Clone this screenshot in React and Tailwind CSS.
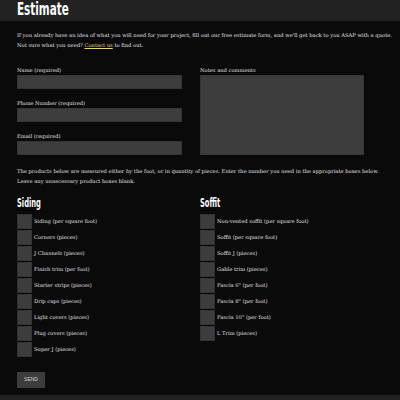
import React from "react";

const siding = [
  "Siding (per square foot)",
  "Corners (pieces)",
  "J Channels (pieces)",
  "Finish trim (per foot)",
  "Starter strips (pieces)",
  "Drip caps (pieces)",
  "Light covers (pieces)",
  "Plug covers (pieces)",
  "Super J (pieces)",
];
const soffit = [
  "Non-vented soffit (per square foot)",
  "Soffit (per square foot)",
  "Soffit J (pieces)",
  "Gable trim (pieces)",
  'Fascia 6" (per foot)',
  'Fascia 8" (per foot)',
  'Fascia 10" (per foot)',
  "L Trim (pieces)",
];

const serif = { fontFamily: '"DejaVu Serif", "Liberation Serif", serif' };
const head = { fontFamily: '"DejaVu Sans Condensed", "DejaVu Sans", sans-serif' };

function Field({ label }) {
  return (
    <div className="flex flex-col">
      <div className="h-[10px] text-[5.2px] leading-[10px] text-[#e2e2e2]" style={serif}>{label}</div>
      <div className="h-[14px] bg-[#3d3d3d] border border-[#353535]" />
    </div>
  );
}

function Product({ items, title }) {
  return (
    <div className="flex flex-col">
      <div className="h-[16px] leading-[16px]">
        <span className="inline-block origin-left scale-x-[0.6] text-[12.5px] font-bold text-white" style={head}>{title}</span>
      </div>
      <div className="mt-[5px] flex flex-col gap-[1px]">
        {items.map((t) => (
          <div key={t} className="flex items-center h-[15px]">
            <div className="w-[15px] h-[15px] bg-[#3d3d3d] border border-[#333]" />
            <span className="ml-[2px] text-[5.2px] text-[#e2e2e2]" style={serif}>{t}</span>
          </div>
        ))}
      </div>
    </div>
  );
}

export default function App() {
  return (
    <div className="w-[400px] h-[400px] bg-[#0a0a0a] flex flex-col overflow-hidden">
      <div className="h-[21px] bg-[#222222] px-[17px] flex items-center shrink-0">
        <h1 className="inline-block origin-left scale-x-[0.68] text-[17px] leading-[21px] font-bold text-white -mt-[3px]" style={head}>Estimate</h1>
      </div>
      <div className="px-[17px] flex flex-col flex-1">
        <p className="mt-[9px] text-[5.2px] leading-[10px] text-[#e2e2e2] whitespace-nowrap" style={serif}>
          If you already have an idea of what you will need for your project, fill out our free estimate form, and we'll get back to you ASAP with a quote.
          <br />
          Not sure what you need? <span className="text-[#e2d77a] underline">Contact us</span> to find out.
        </p>
        <div className="mt-[15px] flex gap-[18px]">
          <div className="w-[165px] flex flex-col gap-[9px]">
            <Field label="Name (required)" />
            <Field label="Phone Number (required)" />
            <Field label="Email (required)" />
          </div>
          <div className="w-[164px] flex flex-col">
            <div className="h-[10px] text-[5.2px] leading-[10px] text-[#e2e2e2]" style={serif}>Notes and comments</div>
            <div className="h-[80px] bg-[#3d3d3d] border border-[#353535]" />
          </div>
        </div>
        <p className="mt-[11px] text-[5.2px] leading-[10px] text-[#e2e2e2] whitespace-nowrap" style={serif}>
          The products below are measured either by the foot, or in quantity of pieces. Enter the number you need in the appropriate boxes below.
          <br />
          Leave any unnecessary product boxes blank.
        </p>
        <div className="mt-[7px] flex gap-[18px]">
          <div className="w-[165px]"><Product title="Siding" items={siding} /></div>
          <div className="w-[164px]"><Product title="Soffit" items={soffit} /></div>
        </div>
        <div className="mt-[15px]">
          <div className="w-[28px] h-[16px] bg-[#3d3d3d] flex items-center justify-center text-[5px] text-[#cfcfcf]" style={{ fontFamily: '"Liberation Sans", sans-serif' }}>SEND</div>
        </div>
      </div>
      <div className="h-[5px] bg-[#222222] shrink-0" />
    </div>
  );
}
